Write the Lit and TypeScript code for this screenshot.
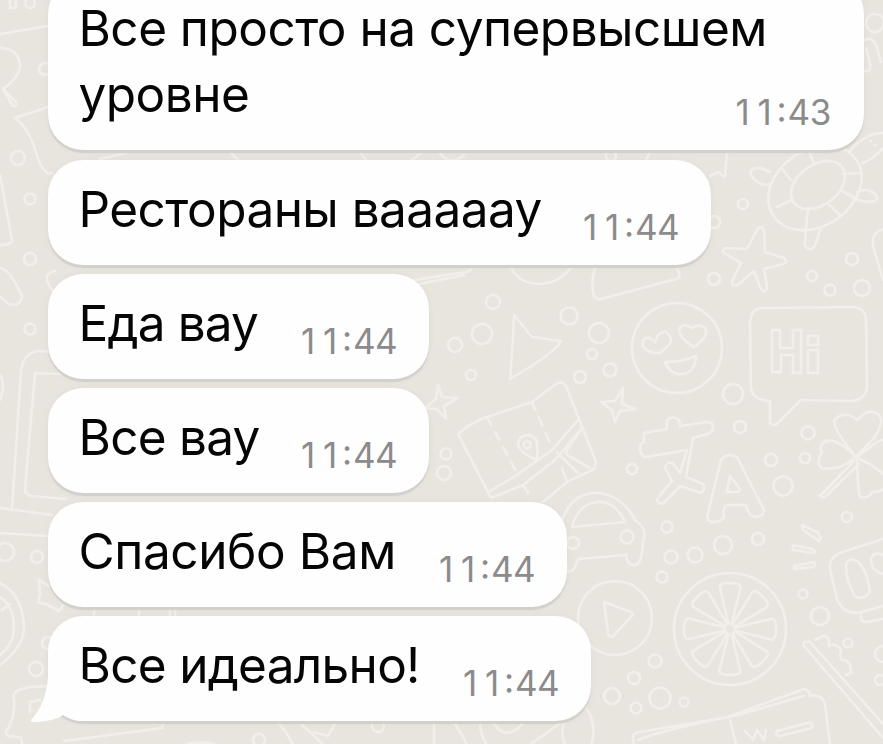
import { LitElement, css, html, svg } from 'lit';
import { customElement, property } from 'lit/decorators.js';

interface Message {
  lines: string[];
  time: string;
  width: number;
  spacing: number;
}

const MESSAGES: Message[] = [
  { lines: ['Все просто на супервысшем', 'уровне'], time: '11:43', width: 815.5, spacing: -0.52 },
  { lines: ['Рестораны вааааау'], time: '11:44', width: 663, spacing: -0.55 },
  { lines: ['Еда вау'], time: '11:44', width: 381, spacing: -0.85 },
  { lines: ['Все вау'], time: '11:44', width: 381, spacing: -0.75 },
  { lines: ['Спасибо Вам'], time: '11:44', width: 519, spacing: -0.4 },
  { lines: ['Все идеально!'], time: '11:44', width: 543, spacing: -0.7 },
];

// small circles scattered between the doodles: x, y, radius
const DOTS: number[][] = [
  [743, 204, 5], [714, 279, 6], [812, 276, 5], [852, 259, 6], [830, 290, 5.5], [862, 288, 8],
  [599, 333, 10], [592, 354, 5], [610, 370, 6.5], [733, 394, 10], [740, 427, 6], [808, 433, 6.5],
  [771, 460, 6], [805, 458, 5], [783, 486, 9.5], [632, 469, 5], [847, 517, 5], [667, 527, 5.5],
  [671, 557, 6.5], [695, 555, 7.5], [723, 545, 9], [758, 539, 6], [662, 577, 5.5], [803, 594, 4.5],
  [820, 616, 9], [848, 643, 4.5], [655, 661, 6.5], [634, 678, 6], [612, 696, 8], [660, 698, 10.5],
  [636, 708, 5.5], [684, 702, 4.5], [493, 302, 7], [482, 334, 10], [455, 345, 7], [471, 375, 5],
  [569, 316, 8.5], [580, 377, 6], [446, 454, 5.5], [444, 473, 7], [18, 158, 7], [30, 199, 5.5],
  [45, 69, 6], [30, 3, 5], [30, 329, 5.5], [5, 552, 9], [37, 557, 6], [36, 669, 7], [48, 643, 6],
  [883, 654, 8], [880, 680, 5], [627, 537, 6.5], [573, 543, 6], [875, 23, 9], [259, 740, 6],
  [378, 726, 6], [714, 222, 6], [30, 259, 6], [611, 156, 5],
];

// 8 segments of the citrus slice
const SEGMENTS = [0, 45, 90, 135, 180, 225, 270, 315];

@customElement('chat-wallpaper')
export class ChatWallpaper extends LitElement {
  static styles = css`
    :host {
      display: block;
    }
    .doodles {
      display: block;
      width: 883px;
      height: 744px;
      fill: none;
      stroke: #f2eeea;
      stroke-width: 2.6;
      stroke-linecap: round;
      stroke-linejoin: round;
    }
    .fold {
      stroke-dasharray: 9 8;
    }
  `;

  render() {
    return html`
      <svg class="doodles" viewBox="0 0 883 744">
        ${DOTS.map(([x, y, r]) => svg`<circle cx=${x} cy=${y} r=${r}></circle>`)}

        <!-- turtle -->
        <ellipse cx="818" cy="185" rx="30" ry="20" transform="rotate(-36 818 185)"></ellipse>
        <ellipse cx="815" cy="188" rx="50" ry="38" transform="rotate(-34 815 188)"></ellipse>
        <path d="M782 169l9 11M777 207l15-7M808 208l-2 20M827 203l14 13M840 190l17 9M843 174l17-1M814 165l-4-12M770 172c-12-7-22-4-19 3 5 8 12 11 18 9M857 192c10-5 20 1 20 6s-12 5-23 1M806 229l-1 14c0 8 9 8 11 0l5-15M849 152q17-20 34-19M862 163q12-4 21-15M870 141l1 0M875 145l1 0"></path>
        <path d="M865 40q7-4 11 5l5 17M865 71q6 2 5-8l-4-15"></path>
        <!-- starfish -->
        <path d="M757 230q5-7 7 2l1 20 19 6q5 4-1 6l-19 5 3 18q-3 9-7 0l-6-16-15 13q-7 4-7-3l9-18-17-10q-3-5 4-5l19 1z"></path>
        <path d="M710 176l8-4 7 5 2-25"></path>
        <path d="M596 266q-5 12-3 26 1 8 8 7l75-20q5-1 3-6l-3-8M883 229q-12 4-10 17l10 34"></path>

        <!-- smiley -->
        <circle cx="677" cy="348" r="45"></circle>
        <path d="M660 353q-12 1-17-7-2-9 7-8l5 4q3-11 11-10 8 6 3 13zM694 347q-15-9-15-18 4-7 13-1 9-5 14 1 2 9-12 18zM665 362q17 0 31-6-1 17-14 18-12 1-17-12z"></path>
        <!-- speech bubble -->
        <path d="M763 308l89-1q12 0 14 11l1 70q-2 12-16 13l-50-1-25 25-6-1v-23q-18-1-19-13l-1-65q1-15 13-15z"></path>
        <path d="M772 330h8v18h13v-18h8v43h-8v-18h-12v17h-9zM808 336h10v9h-10zM808 350h10v23h-10z"></path>

        <!-- four-point sparkles -->
        <path d="M623 388l-1 16 13 5-15 2-5 11-3-12-11-8 14-1zM438 385l4 12 16 1-14 8 2 13-9-10-12-1 11-9z"></path>
        <!-- translate signs -->
        <path d="M644 433l23-4v-9q6-5 12 0l1 6 27-4q6 0 6 5t-5 7l-15 4-7 39 17 7q3 5-2 9l-21-7-16 17q-6 2-7-4l15-18-7-13q1-7 8-5l7 10 7-23-41 7q-6-1-6-9 0-5 4-6zM721 460q7-8 16-3l27 53q0 6-7 7-8 1-11-12h-17q-7 0-5 12-4 6-13 5-5-2-3-9zM730 476l10 13q0 3-4 3l-9 0z"></path>
        <!-- clover -->
        <path d="M856 457q-26-31-21-38 11-9 22 1 12-13 21-6 8 6-4 24zM856 457q-21-21-32-15-6 4-2 10-7 12 0 16 16 4 34-11zM857 458q20-18 26-18M857 460q1 30 3 37 9 2 12-5 8 0 11-3M857 458q15 6 26 16M854 461l-34 35M859 464l-34 33q-5 1-5-2"></path>

        <!-- cursor -->
        <path d="M514 315l18 22 29 4q-6 12-51 38 2-20 4-64z"></path>
        <!-- map -->
        <path d="M458 434q14-12 29-17l45-15 24-18q6-4 10 2l30 76q0 6-4 8l-25 12-24 20M458 434l33 64 32-13 32-25 27-32M490 491l27-16 35-25 26-30M557 452l21 21M582 428l-15 22q-2 4 2 6l21 12M562 468l5 14M523 485l5 8"></path>
        <path class="fold" d="M487 417l31 58M532 402l20 46"></path>
        <path d="M537 460q-17-7-19-15 1-10 10-10 8 1 9 8 1 9 0 17z"></path>
        <circle cx="527" cy="445" r="3.5"></circle>

        <!-- car -->
        <path d="M562 520q10-26 32-27 26-1 42 28 12 8 7 20-1 25-9 24-7 0-8-10l-48 4q-4 15-11 12l-3-20M572 527q6-23 25-25 17-2 28 20z"></path>
        <!-- play button -->
        <circle cx="615" cy="618" r="37"></circle>
        <path d="M604 602l27 10q3 3 0 5l-18 19q-4 2-5-3z"></path>
        <!-- citrus slice -->
        <circle cx="730" cy="629" r="56"></circle>
        ${SEGMENTS.map(
          (a) => svg`<path transform="rotate(${a} 730 629)" d="M728 622l-8-34q-2-5 10-5 13 0 10 7l-8 32q-2 4-4 0z"></path>`
        )}
        <!-- motion strokes -->
        <path d="M802 525l15 7q6 6 2 9l-16-11zM793 545l19 4q6 4 1 4l-20-3zM794 566l20-4q3 3-1 5l-19 2z"></path>
        <!-- clock -->
        <path d="M883 539l-37 12q-18 5-16 18l7 30q5 14 21 14l25-7M861 615q-1 8 7 7l15-3M846 564q4-8 12-2 9 8 12 30-7 9-15 4-9-14-9-32zM883 555q-10-4-12 4 0 12 12 15"></path>
        <!-- toothbrush -->
        <path d="M883 738l-79-92q-2-6 6-4l73 82M815 640l8-4q7-1 6 10 6-4 12 4-2 9 2 10 8 0 8 13l-5 2"></path>
        <!-- book -->
        <path d="M634 744q-4-11 6-12l88-15 76-28q6 1 6 7 12-3 15 9l5 39M638 740q20-9 100-25l66-19M730 720l6 24M745 731l8 9 4-10 7 10 2-10M777 731l30-8q6-1 5 5l-32 8q-6-1-3-5z"></path>

        <!-- left edge -->
        <path d="M0 34l48-8M10 0v8h6V0M0 48q18 0 20 17 0 12-17 24l10 17q5 1 3-4l-12-12M15 118l33-11M15 118q15 11 22 38 7 20 15 17M0 175l12 65q0 5-12 5M0 268q9 0 22 28-1 11-13 8l-9-7M53 291q-13-17 2-20M0 375q6 10 0 25"></path>
        <path d="M12 510l9-140q3-18 18-19l18 1M62 374l-27-1-10 116q0 6 7 7l34 3M0 508l52 7M0 533l48 3M0 583q23 12 24 45-1 20-24 37M0 597q14 10 14 30 0 17-14 28M2 610l8-6M39 580l9 6 9-3v12l8 8-6 8-13-7-8-2 2-9zM52 686q-42 0-38 12 2 18-8 34 0 6 8 4l7 2 1 6M30 712v-10l10-2"></path>
        <!-- bottom edge and the gaps between the messages -->
        <path d="M64 741l98-13 2-8M186 744q16-3 28 0M278 722q10 12 16 24M302 725q14 12 22 21M314 732l14 4 8-14M434 722v24M454 722l14 24M480 722q0 14 8 24M493 722q13 22 31 0M532 743l30-21M564 722q-4 14 2 24M585 707q12 14 7 37M394 283l72-11q8-1 5-12M400 288l64-13M510 264q6 20 31 20 18-1 31-17M94 610v6M139 610v6M170 608v8M175 608v8M100 159l26-6M230 152l8 8M360 152l6 8M412 160l10-8M440 153q10 14 24 2M650 152l-4 8"></path>
      </svg>
    `;
  }
}

@customElement('chat-bubble')
export class ChatBubble extends LitElement {
  @property({ type: Array }) lines: string[] = [];
  @property() time = '';
  @property({ type: Boolean }) tail = false;

  static styles = css`
    :host {
      display: block;
    }
    .bubble {
      position: relative;
      display: flex;
      justify-content: space-between;
      align-items: flex-end;
      box-sizing: border-box;
      padding: 16px 32px 23px 30.5px;
      border-radius: 35px;
      background: #fefefe;
      box-shadow: 0 2.5px 1px #d2d0ca, 0 1px 8px rgba(0, 0, 0, 0.04);
    }
    .text {
      color: #050505;
      font-size: 49.5px;
      line-height: 66px;
      white-space: nowrap;
    }
    .line {
      display: block;
      width: max-content;
    }
    .time {
      display: flex;
      margin-bottom: -9px;
      margin-left: -200px;
      color: #8b8b8b;
      font-size: 35px;
      line-height: 48px;
      letter-spacing: 0;
    }
    /* even digit pitch without the footed tabular "1" */
    .digit {
      width: 22px;
      text-align: center;
    }
    .colon {
      width: 12px;
      text-align: center;
      font-feature-settings: 'case';
    }
    .tail {
      position: absolute;
      left: -18px;
      bottom: -1px;
      width: 60px;
      height: 60px;
      fill: #fefefe;
    }
  `;

  render() {
    return html`
      <div class="bubble">
        ${this.tail
          ? html`<svg class="tail" viewBox="0 0 60 60">
              <path d="M18 0V15Q16 42 1 58Q0 60 5 60Q22 60 33 53Q42 59 52 59L60 20Z"></path>
            </svg>`
          : ''}
        <div class="text">${this.lines.map((line) => html`<span class="line">${line}</span>`)}</div>
        <div class="time">
          ${[...this.time].map((c) => html`<span class=${c === ':' ? 'colon' : 'digit'}>${c}</span>`)}
        </div>
      </div>
    `;
  }
}

@customElement('app-root')
export class AppRoot extends LitElement {
  static styles = css`
    :host {
      display: block;
      position: relative;
      width: 883px;
      height: 744px;
      overflow: hidden;
      background: #e8e5df;
      font-family: Inter, 'Liberation Sans', sans-serif;
    }
    .wallpaper {
      position: absolute;
      inset: 0;
    }
    .thread {
      position: relative;
      display: flex;
      flex-direction: column;
      justify-content: flex-end;
      align-items: flex-start;
      gap: 9px;
      box-sizing: border-box;
      height: 744px;
      padding: 0 0 23px 48px;
    }
    .message:first-child {
      margin-bottom: 1px;
    }
  `;

  render() {
    return html`
      <chat-wallpaper class="wallpaper"></chat-wallpaper>
      <div class="thread">
        ${MESSAGES.map(
          (m, i) => html`
            <chat-bubble
              class="message"
              style="width: ${m.width}px; letter-spacing: ${m.spacing}px"
              .lines=${m.lines}
              .time=${m.time}
              ?tail=${i === MESSAGES.length - 1}
            ></chat-bubble>
          `
        )}
      </div>
    `;
  }
}
